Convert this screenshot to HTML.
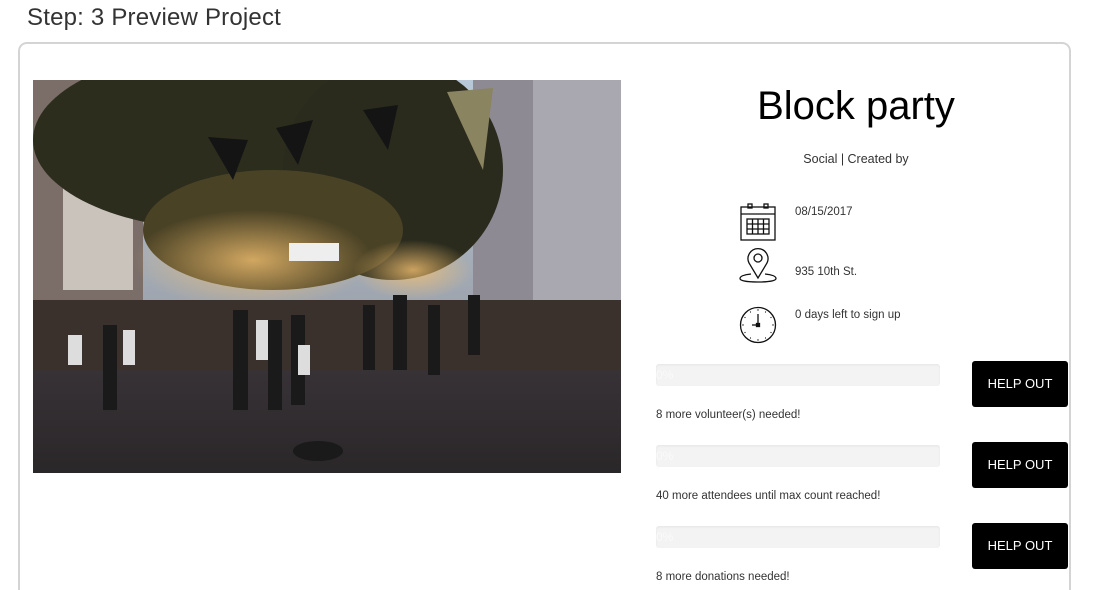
<!DOCTYPE html>
<html style="height:590px;overflow:hidden"><head><meta charset="utf-8"><style>
*{margin:0;padding:0;box-sizing:border-box}
body{width:1095px;height:590px;overflow:hidden;background:#fff;font-family:"Liberation Sans",sans-serif;position:relative;color:#333}
.abs{position:absolute}
h1{position:absolute;left:27px;top:4px;font-size:24px;font-weight:normal;color:#333;letter-spacing:0.2px}
.card{position:absolute;left:18px;top:42px;width:1053px;height:548px;border:2px solid #d4d4d4;border-bottom:none;border-radius:9px 9px 0 0}
.bar{position:absolute;left:656px;width:284px;height:22px;background:#f3f3f3;border-radius:3px;box-shadow:inset 0 1px 2px rgba(0,0,0,.06);color:#fafafa;font-size:12px;line-height:22px}
.btn{position:absolute;left:972px;width:96px;height:46px;background:#000;border-radius:3px;color:#fff;font-size:13px;text-align:center;line-height:46px}
.t{position:absolute;left:656px;font-size:11.5px;color:#333}
.info{position:absolute;left:795px;font-size:11.5px;color:#333}
</style></head><body>
<h1>Step: 3 Preview Project</h1>
<div class="card"></div>
<svg class="abs" style="left:33px;top:80px" width="588" height="393" viewBox="0 0 588 393">
<defs>
<linearGradient id="sky" x1="0" y1="0" x2="0" y2="1"><stop offset="0" stop-color="#b8c8d8"/><stop offset="1" stop-color="#8a8a90"/></linearGradient>
<linearGradient id="road" x1="0" y1="0" x2="0" y2="1"><stop offset="0" stop-color="#3a3438"/><stop offset="1" stop-color="#2a2729"/></linearGradient>
<radialGradient id="glow" cx="0.5" cy="0.5" r="0.5"><stop offset="0" stop-color="#f3c070" stop-opacity=".8"/><stop offset="1" stop-color="#f3c070" stop-opacity="0"/></radialGradient>
</defs>
<rect width="588" height="393" fill="url(#sky)"/>
<rect x="440" y="0" width="148" height="300" fill="#8d8a93"/>
<rect x="500" y="0" width="88" height="260" fill="#a9a7b0"/>
<rect x="0" y="0" width="110" height="280" fill="#7b6e68"/>
<rect x="30" y="60" width="70" height="150" fill="#c9c3bc"/>
<ellipse cx="190" cy="60" rx="190" ry="90" fill="#2d2d1e"/>
<ellipse cx="360" cy="90" rx="110" ry="110" fill="#2a2b1d"/>
<ellipse cx="240" cy="150" rx="130" ry="60" fill="#4a4225"/>
<ellipse cx="220" cy="180" rx="120" ry="50" fill="url(#glow)"/>
<ellipse cx="380" cy="190" rx="60" ry="30" fill="url(#glow)"/>
<rect x="0" y="270" width="588" height="123" fill="url(#road)"/>
<rect x="0" y="220" width="588" height="70" fill="#3a302c"/>
<rect x="256" y="163" width="50" height="18" fill="#eee"/>
<g fill="#1a1a1a"><rect x="70" y="245" width="14" height="85"/><rect x="200" y="230" width="15" height="100"/><rect x="235" y="240" width="14" height="90"/><rect x="258" y="235" width="14" height="90"/><rect x="330" y="225" width="12" height="65"/><rect x="360" y="215" width="14" height="75"/><rect x="395" y="225" width="12" height="70"/><rect x="435" y="215" width="12" height="60"/></g>
<g fill="#ddd"><rect x="223" y="240" width="12" height="40"/><rect x="265" y="265" width="12" height="30"/><rect x="35" y="255" width="14" height="30"/><rect x="90" y="250" width="12" height="35"/></g>
<g fill="#141414"><path d="M175 57 L215 60 L200 100Z"/><path d="M243 48 L280 40 L265 85Z"/><path d="M330 30 L365 25 L355 70Z"/><path d="M414 12 L460 8 L450 90Z" fill="#8a8460"/></g>
<ellipse cx="285" cy="371" rx="25" ry="10" fill="#1a1a1a"/>
</svg>
<div class="abs" style="left:640px;top:81px;width:432px;text-align:center;font-size:40px;color:#000;line-height:50px">Block party</div>
<div class="abs" style="left:640px;top:152px;width:432px;text-align:center;font-size:12.5px;color:#333">Social | Created by</div>
<svg class="abs" style="left:738px;top:202px" width="40" height="40" viewBox="0 0 40 40" fill="none" stroke="#111" stroke-width="1.3">
<rect x="3" y="5" width="34" height="33"/><line x1="3" y1="12" x2="37" y2="12"/><rect x="10" y="2" width="4" height="4"/><rect x="26" y="2" width="4" height="4"/>
<rect x="9" y="17" width="22" height="15"/><line x1="9" y1="22" x2="31" y2="22"/><line x1="9" y1="27" x2="31" y2="27"/><line x1="14.5" y1="17" x2="14.5" y2="32"/><line x1="20" y1="17" x2="20" y2="32"/><line x1="25.5" y1="17" x2="25.5" y2="32"/>
</svg>
<svg class="abs" style="left:738px;top:246px" width="40" height="40" viewBox="0 0 40 40" fill="none" stroke="#111" stroke-width="1.3">
<path d="M20 32 L11 17 A10 10 0 1 1 29 17 Z"/><circle cx="20" cy="12" r="4"/><path d="M13 28 C4 29 2 31 2 32.5 C2 35 10 36 20 36 C30 36 38 35 38 32.5 C38 31 36 29 27 28"/>
</svg>
<svg class="abs" style="left:738px;top:305px" width="40" height="40" viewBox="0 0 40 40" fill="none" stroke="#111" stroke-width="1.3">
<circle cx="20" cy="20" r="17.5"/><line x1="20" y1="9" x2="20" y2="20"/><line x1="20" y1="20" x2="14" y2="20"/><rect x="18.5" y="18.5" width="3" height="3" fill="#111"/>
<g fill="#111" stroke="none"><circle cx="20" cy="5" r=".7"/><circle cx="20" cy="35" r=".7"/><circle cx="5" cy="20" r=".7"/><circle cx="35" cy="20" r=".7"/><circle cx="27.5" cy="7" r=".6"/><circle cx="33" cy="12.5" r=".6"/><circle cx="33" cy="27.5" r=".6"/><circle cx="27.5" cy="33" r=".6"/><circle cx="12.5" cy="33" r=".6"/><circle cx="7" cy="27.5" r=".6"/><circle cx="7" cy="12.5" r=".6"/><circle cx="12.5" cy="7" r=".6"/></g>
</svg>
<div class="info" style="top:206px">08/15/2017</div>
<div class="info" style="top:266px">935 10th St.</div>
<div class="info" style="top:309px">0 days left to sign up</div>
<div class="bar" style="top:364px">0%</div>
<div class="btn" style="top:361px">HELP OUT</div>
<div class="t" style="top:409px">8 more volunteer(s) needed!</div>
<div class="bar" style="top:445px">0%</div>
<div class="btn" style="top:442px">HELP OUT</div>
<div class="t" style="top:490px">40 more attendees until max count reached!</div>
<div class="bar" style="top:526px">0%</div>
<div class="btn" style="top:523px">HELP OUT</div>
<div class="t" style="top:571px">8 more donations needed!</div>
</body></html>
